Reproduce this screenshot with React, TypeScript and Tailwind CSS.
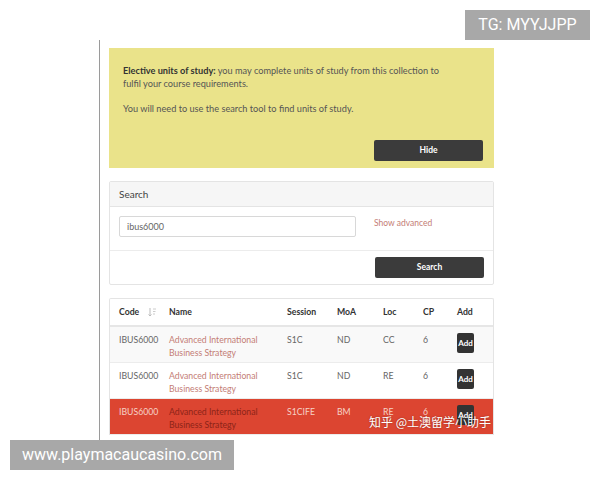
import React from 'react';

const rows = [
  { code: 'IBUS6000', session: 'S1C', moa: 'ND', loc: 'CC', cp: '6', bg: 'bg-[#f9f9f9]', active: false },
  { code: 'IBUS6000', session: 'S1C', moa: 'ND', loc: 'RE', cp: '6', bg: 'bg-white', active: false },
  { code: 'IBUS6000', session: 'S1CIFE', moa: 'BM', loc: 'RE', cp: '6', bg: 'bg-[#dc4531]', active: true },
];

const SortIcon: React.FC = () => (
  <svg width="9" height="10" viewBox="0 0 9 10" className="inline-block">
    <path d="M2 1v8M0.5 7.5L2 9l1.5-1.5" stroke="#bbb" strokeWidth="1" fill="none" />
    <path d="M5 2h3M5 4.5h2.5M5 7h2" stroke="#ccc" strokeWidth="1" />
  </svg>
);

const App: React.FC = () => {
  return (
    <div
      className="relative w-[600px] h-[480px] overflow-hidden bg-white text-[#555]"
      style={{ fontFamily: 'Lato, "Open Sans", sans-serif' }}
    >
      <div className="pl-[99px] pt-[40px]">
        <div className="border-l border-[#9a9a9a] pl-[9px] w-[395px] pt-[8px] pb-[10px]">
          {/* elective info */}
          <div className="bg-[#eae38a] h-[120px] px-[14px] pt-[16px] flex flex-col text-[9.2px] leading-[13px] text-[#555]">
            <p>
              <span className="font-bold text-[#333]">Elective units of study:</span> you may complete units of study from this collection to
              <br />
              fulfil your course requirements.
            </p>
            <p className="mt-[12px]">You will need to use the search tool to find units of study.</p>
            <div className="mt-auto mb-[7px] flex justify-end -mr-[3px]">
              <button className="w-[109px] h-[21px] rounded-[2px] bg-[#3b3b3b] text-white text-[8.5px] font-bold">
                Hide
              </button>
            </div>
          </div>

          {/* search panel */}
          <div className="mt-[13px] border border-[#e4e4e4] rounded-[2px]">
            <div className="h-[25px] bg-[#f6f6f6] border-b border-[#e4e4e4] px-[9px] flex items-center text-[10px] text-[#444]">
              Search
            </div>
            <div className="h-[44px] flex items-start pt-[9px] px-[9px] border-b border-[#ececec]">
              <div className="w-[237px] h-[21px] border border-[#d8d8d8] rounded-[2px] flex items-center px-[7px] text-[9px] text-[#666]">
                ibus6000
              </div>
              <span className="ml-[18px] mt-[1px] text-[8.5px] text-[#c47d75]">Show advanced</span>
            </div>
            <div className="h-[33px] flex items-center justify-end pr-[9px]">
              <button className="w-[109px] h-[21px] rounded-[2px] bg-[#3b3b3b] text-white text-[8.5px] font-bold">
                Search
              </button>
            </div>
          </div>

          {/* results */}
          <div className="mt-[13px] border border-[#e4e4e4] border-b-0 rounded-t-[2px] text-[8.7px]">
            <div className="h-[28px] flex items-center px-[9px] border-b-2 border-[#e6e6e6] font-bold text-[#333]">
              <div className="w-[50px] flex items-center gap-[9px]">
                Code <SortIcon />
              </div>
              <div className="w-[118px]">Name</div>
              <div className="w-[50px]">Session</div>
              <div className="w-[46px]">MoA</div>
              <div className="w-[40px]">Loc</div>
              <div className="w-[34px]">CP</div>
              <div>Add</div>
            </div>
            {rows.map((r, i) => (
              <div
                key={i}
                className={`h-[36px] flex items-start pt-[7px] px-[9px] border-b border-[#ececec] ${r.bg} ${
                  r.active ? 'text-[#f6d2c6]' : 'text-[#666]'
                }`}
              >
                <div className="w-[50px] leading-[12px]">{r.code}</div>
                <div
                  className={`w-[118px] leading-[12.5px] ${r.active ? 'text-[#8c2418]' : 'text-[#c47d75]'}`}
                >
                  Advanced International
                  <br />
                  Business Strategy
                </div>
                <div className="w-[50px] leading-[12px]">{r.session}</div>
                <div className="w-[46px] leading-[12px]">{r.moa}</div>
                <div className="w-[40px] leading-[12px]">{r.loc}</div>
                <div className="w-[34px] leading-[12px]">{r.cp}</div>
                <div className="w-[17px] h-[20px] -mt-[1px] rounded-[2px] bg-[#333] text-white text-[8px] font-bold flex items-center justify-center">
                  Add
                </div>
              </div>
            ))}
          </div>
        </div>
      </div>

      {/* watermarks */}
      <div
        className="absolute left-[369px] top-[413px] text-[12px] text-white [text-shadow:0_0_2px_rgba(0,0,0,0.35)]"
        style={{ fontFamily: '"Noto Sans CJK SC", sans-serif' }}
      >
        知乎 @土澳留学小助手
      </div>
      <div
        className="absolute left-[465px] top-[10px] w-[125px] h-[30px] bg-[#a8a8a8] text-white text-[16px] flex items-center justify-center"
        style={{ fontFamily: 'Roboto, sans-serif' }}
      >
        TG: MYYJJPP
      </div>
      <div
        className="absolute left-[10px] top-[440px] w-[224px] h-[30px] bg-[#a8a8a8] text-white text-[16px] flex items-center justify-center"
        style={{ fontFamily: 'Roboto, sans-serif' }}
      >
        www.playmacaucasino.com
      </div>
    </div>
  );
};

export default App;
